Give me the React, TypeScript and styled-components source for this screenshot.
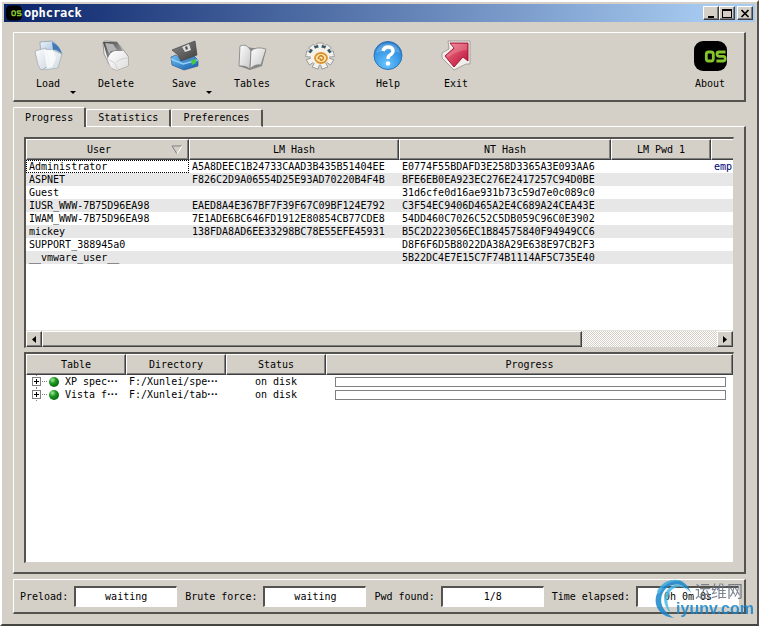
import React from "react";
import styled, { createGlobalStyle } from "styled-components";

const face = "#d4d0c8";
const dark = "#404040";
const shade = "#808080";
const mono = '"DejaVu Sans Mono", "Liberation Mono", monospace';

const Global = createGlobalStyle`
  *, *::before, *::after { box-sizing: border-box; }
  body { margin: 0; background: ${face}; font: 10px/13px ${mono}; color: #000; }
  button, input { font: inherit; color: inherit; }
  button { border: 0; padding: 0; background: none; }
`;

const Window = styled.main`
  min-height: 100vh;
  display: flex;
  flex-direction: column;
  background: ${face};
  padding: 2px 2px 1px 2px;
  border: 2px solid;
  border-color: #fff #55534f #45433f #fff;
  overflow: hidden;
`;
const TitleBar = styled.header`
  display: flex;
  align-items: center;
  height: 18px;
  padding: 0 2px;
  background: linear-gradient(to right, #0a246a, #a6caf0 94%);
`;
const Title = styled.h1`
  margin: 0 auto 0 2px;
  color: #fff;
  font: bold 12px/16px ${mono};
`;
const CaptionButton = styled.button<{ $gap?: boolean }>`
  display: grid;
  place-items: center;
  width: 16px;
  height: 14px;
  margin-left: ${(p) => (p.$gap ? 2 : 0)}px;
  background: ${face};
  border: 1px solid;
  border-color: #fff ${dark} ${dark} #fff;
  box-shadow: inset -1px -1px ${shade};
`;
const Body = styled.div`
  flex: 1;
  display: flex;
  flex-direction: column;
  padding: 10px 9px 9px;
`;
const Toolbar = styled.nav`
  display: flex;
  height: 70px;
  border: solid;
  border-width: 1px 2px 2px 1px;
  border-color: #fff #55534f #55534f #fff;
`;
const ToolButton = styled.button<{ $end?: boolean }>`
  position: relative;
  width: 68px;
  padding-top: 7px;
  display: flex;
  flex-direction: column;
  align-items: center;
  gap: 5px;
  margin-left: ${(p) => (p.$end ? "auto" : "0")};
`;
const MenuArrow = styled.span`
  position: absolute;
  right: 6px;
  bottom: 6px;
  border: 3px solid transparent;
  border-top-color: #000;
  border-bottom: 0;
`;
const Tabs = styled.div`
  display: flex;
  align-items: flex-end;
  height: 20px;
  margin-top: 5px;
  margin-bottom: -1px;
`;
const Tab = styled.button<{ $active?: boolean }>`
  height: ${(p) => (p.$active ? 20 : 18)}px;
  padding: 0 11px ${(p) => (p.$active ? 0 : 1)}px;
  position: relative;
  background: ${face};
  border: solid;
  border-width: 1px 2px 0 1px;
  border-color: #fff #55534f #fff #fff;
  border-radius: 2px 2px 0 0;
  border-bottom: ${(p) => (p.$active ? "0" : "1px solid #fff")};
`;
const Panel = styled.section`
  flex: 1;
  display: flex;
  flex-direction: column;
  gap: 4px;
  padding: 10px 10px 9px;
  border: solid;
  border-width: 1px 2px 2px 1px;
  border-color: #fff #55534f #55534f #fff;
`;
const ListView = styled.div`
  flex: 1 1 210px;
  min-width: 0;
  display: flex;
  flex-direction: column;
  background: #fff;
  border: solid;
  border-width: 2px 1px 1px 2px;
  border-color: #55534f ${face} ${face} #55534f;
  overflow: hidden;
`;
const Viewport = styled.div`
  flex: 1;
  overflow: hidden;
`;
const Grid = styled.table<{ $wide?: boolean }>`
  table-layout: fixed;
  border-collapse: separate;
  border-spacing: 0;
  width: ${(p) => (p.$wide ? "876px" : "100%")};
`;
const Col = styled.col<{ $w?: number }>`
  width: ${(p) => (p.$w ? `${p.$w}px` : "auto")};
`;
const Th = styled.th`
  height: 21px;
  padding: 0;
  font-weight: normal;
  text-align: center;
  background: ${face};
  border: 1px solid;
  border-color: #fff ${dark} ${dark} #fff;
  box-shadow: inset -1px -1px ${shade};
`;
const Sortable = styled.span`
  display: flex;
  align-items: center;
  padding-right: 5px;
  & > span { flex: 1; }
`;
const Row = styled.tr<{ $alt?: boolean }>`
  background: ${(p) => (p.$alt ? "#e7e7e7" : "#fff")};
`;
const Td = styled.td<{ $focus?: boolean; $center?: boolean; $hint?: boolean }>`
  height: 13px;
  padding: 0 3px;
  line-height: 13px;
  white-space: nowrap;
  overflow: hidden;
  text-align: ${(p) => (p.$center ? "center" : "left")};
  color: ${(p) => (p.$hint ? "#00007a" : "#000")};
  outline: ${(p) => (p.$focus ? "1px dotted #000" : "none")};
  outline-offset: -1px;
`;
const ScrollBar = styled.div`
  display: flex;
  height: 17px;
  border-top: 1px solid #e6e3dd;
  background: repeating-conic-gradient(${face} 0% 25%, #fff 0% 50%) 0 0 / 2px 2px;
`;
const raised = `
  background: ${face};
  border: 1px solid;
  border-color: #fff ${dark} ${dark} #fff;
  box-shadow: inset -1px -1px ${shade};
`;
const ScrollButton = styled.button`
  ${raised}
  display: grid;
  place-items: center;
  width: 16px;
`;
const Track = styled.div`
  flex: 1;
  display: flex;
`;
const Thumb = styled.div`
  ${raised}
  width: 80%;
`;
const TreeCell = styled.div`
  display: flex;
  align-items: center;
  height: 13px;
  padding-left: 3px;
`;
const Expander = styled.button`
  display: block;
  width: 15px;
  height: 13px;
  & > svg { display: block; }
`;
const Ball = styled.span`
  width: 10px;
  height: 10px;
  margin: 0 6px 0 2px;
  border-radius: 50%;
  background: radial-gradient(circle at 35% 30%, #a8e8a0 0, #1f9a24 35%, #077010 70%, #0a5a10);
`;
const Dots = styled.span`
  font: bold 11px/13px "Liberation Sans", sans-serif;
`;
const Meter = styled.progress`
  appearance: none;
  display: block;
  width: calc(100% - 10px);
  height: 10px;
  margin-left: 6px;
  background: #fff;
  border: 1px solid ${shade};
  &::-webkit-progress-bar { background: #fff; }
  &::-webkit-progress-value { background: #0a246a; }
`;
const StatusBar = styled.footer`
  display: flex;
  align-items: center;
  gap: 8px;
  height: 35px;
  margin-top: 5px;
  padding: 0 5px 0 6px;
  border: solid;
  border-width: 1px 2px 2px 1px;
  border-color: #fff #55534f #55534f #fff;
`;
const StatusItem = styled.label`
  flex: 1 1 auto;
  display: flex;
  align-items: center;
  gap: 6px;
  white-space: nowrap;
`;
const StatusField = styled.input`
  flex: 1;
  width: 80px;
  min-width: 0;
  height: 21px;
  padding: 0;
  text-align: center;
  background: #fff;
  border: solid;
  border-width: 2px 1px 1px 2px;
  border-color: #55534f #fff #fff #55534f;
  border-radius: 0;
`;
const Watermark = styled.div`
  position: fixed;
  right: 5px;
  bottom: 4px;
  width: 99px;
  height: 44px;
  pointer-events: none;
  opacity: 0.85;
`;
const Swirl = styled.svg`
  position: absolute;
  left: 0;
  top: 0;
`;
const MarkName = styled.span`
  position: absolute;
  right: 11px;
  top: 3px;
  font: 16px/18px "Noto Sans CJK SC", sans-serif;
  color: #667080;
`;
const MarkSite = styled.span`
  position: absolute;
  right: 0;
  top: 22px;
  font: bold 16px/18px "Liberation Sans", sans-serif;
  color: #1684cc;
`;

const Icon = ({ children }: { children: React.ReactNode }) => (
  <svg width="32" height="32" viewBox="0 0 32 32" aria-hidden="true">{children}</svg>
);

const Gradient = ({ id, from, to }: { id: string; from: string; to: string }) => (
  <linearGradient id={id} x1="0" y1="0" x2="1" y2="1">
    <stop offset="0" stopColor={from} />
    <stop offset="1" stopColor={to} />
  </linearGradient>
);

const LoadIcon = () => (
  <Icon>
    <defs>
      <Gradient id="pg" from="#ffffff" to="#cdd7df" />
      <Gradient id="bl" from="#eef4fa" to="#6f9cc8" />
    </defs>
    <path d="M8 2 20 1Q27 5 30 14L25 25 9 19Z" fill="url(#bl)" stroke="#8798a8" strokeWidth=".7" />
    <path d="M20 2Q27 5 30 14Q25 9 21 10Z" fill="#3f78b4" />
    <path d="M13 9 21 10 30 14 26 28 12 30Z" fill="url(#pg)" stroke="#a2acb5" strokeWidth=".7" />
    <path d="M3 11 14 8 18 26 9 30 6 25Z" fill="url(#pg)" stroke="#9aa4ad" strokeWidth=".7" />
    <path d="M12 10 21 10 24 18 20 27 15 28Z" fill="#f8fafb" opacity=".9" />
  </Icon>
);
const DeleteIcon = () => (
  <Icon>
    <defs>
      <Gradient id="er" from="#ffffff" to="#dcdcdc" />
      <Gradient id="eg" from="#444444" to="#b5b5b5" />
    </defs>
    <path d="M3 3Q3 1 6 1L17 2 28 16V26L17 30Q12 30 10 26L4 14Z" fill="#eee" stroke="#888" strokeWidth=".8" />
    <path d="M3 2 17 2 23 11 13 13 8 20Z" fill="url(#eg)" />
    <path d="M5 3 9 14 11 11 17 10 13 4Z" fill="#b4b4b4" />
    <path d="M8 18Q10 12 15 11L23 11 28 17V26L17 30Q12 29 10 26Z" fill="url(#er)" />
    <path d="M9 20Q16 22 17 29M16 23Q20 18 28 18" fill="none" stroke="#c9c9c9" strokeWidth=".8" />
  </Icon>
);
const SaveIcon = () => (
  <Icon>
    <defs>
      <Gradient id="sv" from="#6fc0f5" to="#1559a8" />
      <Gradient id="fd" from="#8a8a8a" to="#3d3d3d" />
    </defs>
    <path d="M3 17 8 15 14 20 26 16 30 20V26L16 30 4 25Z" fill="url(#sv)" stroke="#2c5e92" strokeWidth=".7" />
    <path d="M3 19 15 24 30 20" fill="none" stroke="#8fd0fb" strokeWidth="1.5" />
    <path d="M23 20 28 19V23L24 25Z" fill="#49c646" />
    <path d="M4 10 27 1 29 15 13 21 10 15Z" fill="url(#fd)" stroke="#444" strokeWidth=".7" />
    <path d="M14 7 21 4 23 10 17 12Z" fill="#ddd" />
    <path d="M17 7 19 6 20 9 18 10Z" fill="#555" />
  </Icon>
);
const TablesIcon = () => (
  <Icon>
    <defs><Gradient id="bk" from="#ffffff" to="#c4c4c4" /></defs>
    <path d="M4 6 3 26 14 30 26 26 30 10Z" fill="#888" />
    <path d="M4 6Q11 3 15 11L14 29Q9 25 3 26Z" fill="url(#bk)" stroke="#777" strokeWidth=".7" />
    <path d="M15 11Q20 6 30 9L25 25Q18 24 14 29Z" fill="url(#bk)" stroke="#777" strokeWidth=".7" />
  </Icon>
);
const CrackIcon = () => (
  <Icon>
    <g transform="translate(16 16) scale(1 .92)">
      {Array.from({ length: 9 }, (_, i) => (
        <path
          key={i}
          d="M-2.500-8 -3.200-14H3.200L2.500-8Z"
          transform={`rotate(${i * 40})`}
          fill="#f4f1e9"
          stroke="#8b9297"
          strokeWidth=".8"
        />
      ))}
      {[-60, -20, 20, 60].map((angle) => (
        <path key={angle} d="M-1.800-8 -2.200-12H2.200L1.800-8Z" transform={`rotate(${angle})`} fill="#36596d" />
      ))}
      <circle r="9.500" fill="#f4f1e9" />
    </g>
    <ellipse cx="17" cy="18" rx="6" ry="5" fill="#ffe9b0" stroke="#e0922c" strokeWidth="1.800" />
    <path d="M14 19Q15 15 18 16Q21 18 18 20Q16 21 16 18" fill="none" stroke="#c97a22" strokeWidth="1.400" />
  </Icon>
);
const HelpIcon = () => (
  <Icon>
    <defs>
      <radialGradient id="hp" cx=".45" cy=".8" r=".85">
        <stop offset="0" stopColor="#69c5ff" />
        <stop offset=".6" stopColor="#3797e4" />
        <stop offset="1" stopColor="#1e6fc1" />
      </radialGradient>
    </defs>
    <circle cx="16" cy="15.500" r="14" fill="url(#hp)" stroke="#2f74b8" />
    <path d="M4 13Q6 3 16 3T28 13Q16 8 4 13Z" fill="#fff" opacity=".2" />
    <path d="M11 11Q12 7 16 7Q21 7 21 11Q21 13 18 15Q16 16 16 19" fill="none" stroke="#fff" strokeWidth="3.400" />
    <circle cx="16" cy="23.500" r="2.200" fill="#fff" />
  </Icon>
);
const ExitIcon = () => (
  <Icon>
    <defs><Gradient id="ex" from="#f27b8d" to="#b90b32" /></defs>
    <path d="M8 1H30V24H26L14 30 2 18V13L9 9Z" fill="#f1eeec" stroke="#97908d" strokeWidth=".8" strokeLinejoin="round" />
    <path d="M10 3H28V21L23 17 14 27 5 16 14 8Z" fill="url(#ex)" stroke="#a20e30" strokeWidth=".9" />
    <path d="M11 4H27V10Q17 11 8 17L6 16 15 9Z" fill="#fff" opacity=".18" />
  </Icon>
);
const OsLogo = ({ size = 33 }: { size?: number }) => (
  <svg width={size} height={size === 33 ? 32 : size} viewBox="0 0 33 32" preserveAspectRatio="none" aria-hidden="true">
    <rect y="1" width="33" height="30" rx="9" fill="#000" />
    <rect x="12.300" y="12" width="7" height="9" rx="2.300" fill="none" stroke="#84c52b" strokeWidth="2.800" />
    <path d="M31.500 12H25Q23 12 23 14T25 16.400H29.400Q31.200 16.400 31.200 18.700T29.400 21H22.400" fill="none" stroke="#84c52b" strokeWidth="2.800" />
  </svg>
);

const tools = [
  { label: "Load", icon: <LoadIcon />, menu: true },
  { label: "Delete", icon: <DeleteIcon /> },
  { label: "Save", icon: <SaveIcon />, menu: true },
  { label: "Tables", icon: <TablesIcon /> },
  { label: "Crack", icon: <CrackIcon /> },
  { label: "Help", icon: <HelpIcon /> },
  { label: "Exit", icon: <ExitIcon /> },
];
const users = [
  ["Administrator", "A5A8DEEC1B24733CAAD3B435B51404EE", "E0774F55BDAFD3E258D3365A3E093AA6", "", "emp"],
  ["ASPNET", "F826C2D9A06554D25E93AD70220B4F4B", "BFE6EB0EA923EC276E2417257C94D0BE", "", ""],
  ["Guest", "", "31d6cfe0d16ae931b73c59d7e0c089c0", "", ""],
  ["IUSR_WWW-7B75D96EA98", "EAED8A4E367BF7F39F67C09BF124E792", "C3F54EC9406D465A2E4C689A24CEA43E", "", ""],
  ["IWAM_WWW-7B75D96EA98", "7E1ADE6BC646FD1912E80854CB77CDE8", "54DD460C7026C52C5DB059C96C0E3902", "", ""],
  ["mickey", "138FDA8AD6EE33298BC78E55EFE45931", "B5C2D223056EC1B84575840F94949CC6", "", ""],
  ["SUPPORT_388945a0", "", "D8F6F6D5B8022DA38A29E638E97CB2F3", "", ""],
  ["__vmware_user__", "", "5B22DC4E7E15C7F74B1114AF5C735E40", "", ""],
];
const tables = [
  { name: "XP spec", dir: "F:/Xunlei/spe" },
  { name: "Vista f", dir: "F:/Xunlei/tab" },
];
const stats = [
  ["Preload:", "waiting"],
  ["Brute force:", "waiting"],
  ["Pwd found:", "1/8"],
  ["Time elapsed:", "0h 0m 0s"],
];

const UserList = () => (
  <ListView>
    <Viewport>
      <Grid $wide>
        <colgroup>
          <Col $w={163} /><Col $w={210} /><Col $w={212} /><Col $w={100} /><Col />
        </colgroup>
        <thead>
          <tr>
            <Th>
              <Sortable>
                <span>User</span>
                <svg width="12" height="10" viewBox="0 0 12 10" aria-hidden="true">
                  <path d="M11 1H1L6 9" fill="none" stroke="#808080" />
                  <path d="M6 9 11 1" stroke="#fff" />
                </svg>
              </Sortable>
            </Th>
            <Th>LM Hash</Th><Th>NT Hash</Th><Th>LM Pwd 1</Th><Th />
          </tr>
        </thead>
        <tbody>
          {users.map((user, r) => (
            <Row key={user[0]} $alt={r % 2 === 1}>
              {user.map((text, c) => (
                <Td key={c} $focus={r === 0 && c === 0} $hint={c === 4}>{text}</Td>
              ))}
            </Row>
          ))}
        </tbody>
      </Grid>
    </Viewport>
    <ScrollBar>
      <ScrollButton aria-label="Scroll left">
        <svg width="4" height="7"><path d="M4 0V7L0 3.500Z" /></svg>
      </ScrollButton>
      <Track><Thumb /></Track>
      <ScrollButton aria-label="Scroll right">
        <svg width="4" height="7"><path d="M0 0V7L4 3.500Z" /></svg>
      </ScrollButton>
    </ScrollBar>
  </ListView>
);

const TableList = () => (
  <ListView>
    <Grid>
      <colgroup>
        <Col $w={100} /><Col $w={100} /><Col $w={100} /><Col />
      </colgroup>
      <thead>
        <tr><Th>Table</Th><Th>Directory</Th><Th>Status</Th><Th>Progress</Th></tr>
      </thead>
      <tbody>
        {tables.map((t) => (
          <Row key={t.name}>
            <Td>
              <TreeCell>
                <Expander aria-label={`Expand ${t.name}`}>
                  <svg width="15" height="13" shapeRendering="crispEdges">
                    <rect x=".5" y="2.500" width="8" height="8" fill="#fff" stroke="#808080" />
                    <path d="M2 6.500H7M4.500 4V9" stroke="#000" />
                    <path d="M10 6.500H15M4.500 0V2M4.500 12V13" stroke="#808080" strokeDasharray="1 1" />
                  </svg>
                </Expander>
                <Ball />
                {t.name}<Dots>···</Dots>
              </TreeCell>
            </Td>
            <Td>{t.dir}<Dots>···</Dots></Td>
            <Td $center>on disk</Td>
            <Td><Meter value={0} max={100} aria-label={`${t.name} progress`} /></Td>
          </Row>
        ))}
      </tbody>
    </Grid>
  </ListView>
);

export default function App() {
  return (
    <>
      <Global />
      <Window>
        <TitleBar>
          <OsLogo size={16} />
          <Title>ophcrack</Title>
          <CaptionButton aria-label="Minimize">
            <svg width="10" height="9"><path d="M2 7H8V9H2Z" /></svg>
          </CaptionButton>
          <CaptionButton aria-label="Maximize">
            <svg width="10" height="9" shapeRendering="crispEdges">
              <path d="M.5 0V8.500H9.500V0" fill="none" stroke="#000" />
              <path d="M0 0H10V2H0Z" />
            </svg>
          </CaptionButton>
          <CaptionButton aria-label="Close" $gap>
            <svg width="10" height="9"><path d="M1.500 1 8.500 8M8.500 1 1.500 8" stroke="#000" strokeWidth="1.700" /></svg>
          </CaptionButton>
        </TitleBar>
        <Body>
          <Toolbar>
            {tools.map((t) => (
              <ToolButton key={t.label}>
                {t.icon}
                <span>{t.label}</span>
                {t.menu && <MenuArrow />}
              </ToolButton>
            ))}
            <ToolButton $end>
              <OsLogo />
              <span>About</span>
            </ToolButton>
          </Toolbar>
          <Tabs role="tablist">
            <Tab role="tab" aria-selected="true" $active>Progress</Tab>
            <Tab role="tab" aria-selected="false">Statistics</Tab>
            <Tab role="tab" aria-selected="false">Preferences</Tab>
          </Tabs>
          <Panel role="tabpanel">
            <UserList />
            <TableList />
          </Panel>
          <StatusBar>
            {stats.map(([label, value]) => (
              <StatusItem key={label}>
                {label}
                <StatusField readOnly value={value} />
              </StatusItem>
            ))}
          </StatusBar>
        </Body>
      </Window>
      <Watermark>
        <Swirl width="40" height="42" viewBox="0 0 40 42" aria-hidden="true">
          <path d="M36 15C31-1 14-2 5 10C-5 24 3 39 19 40C9 34 4 26 7 17C11 5 27 2 36 15Z" fill="#1687cd" />
          <path d="M34 14C28 4 16 5 11 14C7 22 10 30 16 35C12 27 11 21 15 14C19 8 28 6 34 14Z" fill="#47b9e8" />
          <path d="M2 13C8 2 20-1 29 4C19 1 9 5 4 16Z" fill="#39a9df" />
        </Swirl>
        <MarkName>运维网</MarkName>
        <MarkSite>iyunv.com</MarkSite>
      </Watermark>
    </>
  );
}
